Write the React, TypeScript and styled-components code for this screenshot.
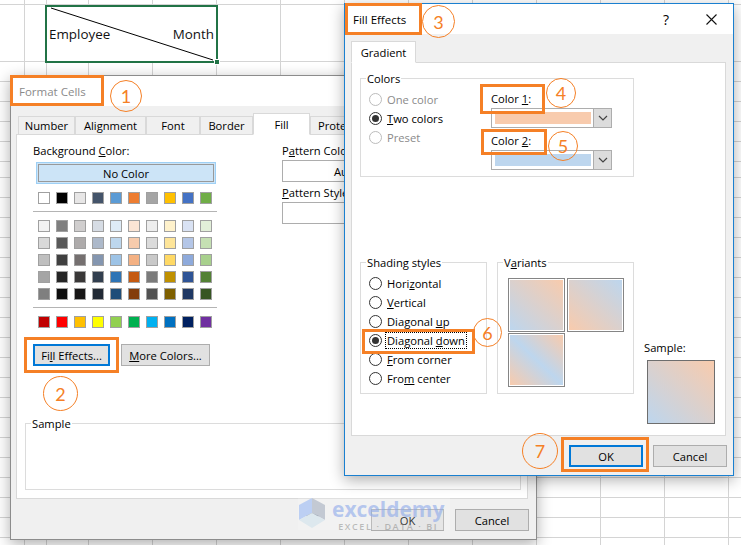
import React from "react";
import styled, { createGlobalStyle } from "styled-components";

const GRID = "#d4d4d4";
const ORANGE = "#f58026";
const PEACH = "#f8cbad";
const BLUE = "#bdd6ee";

const standardRow = ["#ffffff", "#000000", "#e7e6e6", "#44546a", "#5b9bd5", "#ed7d31", "#a5a5a5", "#ffc000", "#4472c4", "#70ad47"];
const themeRows = [
  ["#f2f2f2", "#7f7f7f", "#d0cece", "#d6dce4", "#deebf6", "#fbe5d5", "#ededed", "#fff2cc", "#d9e2f3", "#e2efd9"],
  ["#d9d9d9", "#595959", "#aeabab", "#adb9ca", "#bdd7ee", "#f7cbac", "#dbdbdb", "#fee599", "#b4c6e7", "#c5e0b3"],
  ["#bfbfbf", "#404040", "#757070", "#8496b0", "#9dc3e6", "#f4b183", "#c9c9c9", "#ffd965", "#8eaadb", "#a8d08d"],
  ["#a5a5a5", "#262626", "#3a3838", "#323f4f", "#2e74b5", "#c55a11", "#7b7b7b", "#bf9000", "#2f5496", "#538135"],
  ["#7f7f7f", "#0d0d0d", "#171616", "#222a35", "#1f4e79", "#833c0b", "#525252", "#7f6000", "#1f3864", "#375623"],
];
const brightRow = ["#c00000", "#ff0000", "#ffc000", "#ffff00", "#92d050", "#00b050", "#00b0f0", "#0070c0", "#002060", "#7030a0"];

const boxes = [
  { x: 10, y: 75, w: 94, h: 31 },
  { x: 24, y: 337, w: 95, h: 36 },
  { x: 345, y: 3, w: 77, h: 32 },
  { x: 480, y: 84, w: 65, h: 30 },
  { x: 481, y: 129, w: 66, h: 26 },
  { x: 362, y: 329, w: 113, h: 25 },
  { x: 561, y: 437, w: 88, h: 35 },
];
const circles = [
  { n: 1, x: 110, y: 80, d: 32 },
  { n: 2, x: 43, y: 376, d: 35 },
  { n: 3, x: 422, y: 5, d: 33 },
  { n: 4, x: 546, y: 78, d: 30 },
  { n: 5, x: 548, y: 131, d: 30 },
  { n: 6, x: 473, y: 318, d: 29 },
  { n: 7, x: 522, y: 433, d: 36 },
];

const GlobalStyle = createGlobalStyle`
  html, body {
    margin: 0;
    padding: 0;
    width: 741px;
    height: 545px;
    overflow: hidden;
    background: #fff;
  }
  * {
    box-sizing: border-box;
  }
`;

const Sheet = styled.div`
  position: relative;
  width: 741px;
  height: 545px;
  display: flex;
  flex-direction: column;
  overflow: hidden;
  font-family: "Open Sans", "Noto Sans", sans-serif;
  font-size: 11.2px;
  color: #000;
  background-image:
    linear-gradient(90deg, ${GRID} 1px, transparent 1px),
    linear-gradient(90deg, ${GRID} 1px, transparent 1px);
  background-size: 64px 100%, 1px 100%;
  background-position: 24px 0, 46px 0;
  background-repeat: repeat-x, no-repeat;
`;

const TallRow = styled.div`
  flex: none;
  height: 58px;
  margin-top: 4px;
  border-top: 1px solid ${GRID};
  border-bottom: 1px solid ${GRID};
`;

const Rows = styled.div<{ $height?: number; $offset: number }>`
  flex: ${(p) => (p.$height ? "none" : "1")};
  height: ${(p) => (p.$height ? `${p.$height}px` : "auto")};
  background-image: linear-gradient(${GRID} 1px, transparent 1px);
  background-size: 100% 20px;
  background-position: 0 ${(p) => p.$offset}px;
`;

const Cell = styled.div`
  position: absolute;
  left: 45px;
  top: 5px;
  width: 173px;
  height: 58px;
  border: 2px solid #217346;
  display: flex;
  align-items: center;
  justify-content: space-between;
  padding: 0 2px;
  font-size: 13.4px;
  color: #111;
  background: #fff;
`;

const Diagonal = styled.svg`
  position: absolute;
  left: -2px;
  top: -2px;
`;

const Handle = styled.div`
  position: absolute;
  right: -4px;
  bottom: -4px;
  width: 6px;
  height: 6px;
  background: #217346;
  border: 1px solid #fff;
`;

const Dialog = styled.div<{ $x: number; $y: number; $w: number; $h: number; $active?: boolean }>`
  position: absolute;
  left: ${(p) => p.$x}px;
  top: ${(p) => p.$y}px;
  width: ${(p) => p.$w}px;
  height: ${(p) => p.$h}px;
  display: flex;
  flex-direction: column;
  isolation: isolate;
  border: 1px solid ${(p) => (p.$active ? "#1a80d0" : "#8c8c8c")};
  box-shadow: 0 4px 14px rgba(0, 0, 0, 0.32);
  background: #f0f0f0;
`;

const TitleBar = styled.div<{ $muted?: boolean; $pad: number }>`
  flex: none;
  height: 30px;
  background: #fff;
  display: flex;
  align-items: center;
  justify-content: space-between;
  padding-left: ${(p) => p.$pad}px;
  font-size: 11.5px;
  color: ${(p) => (p.$muted ? "#8a8a8a" : "#000")};
`;

const TitleIcons = styled.div`
  display: flex;
  align-items: center;
`;

const HelpMark = styled.span`
  width: 44px;
  font-size: 14px;
  text-align: center;
  margin-right: 1px;
`;

const CloseButton = styled.span`
  width: 44px;
  display: flex;
  justify-content: center;
`;

const TabStrip = styled.div<{ $left: number }>`
  flex: none;
  height: 29px;
  padding-left: ${(p) => p.$left}px;
  display: flex;
  align-items: flex-end;
  position: relative;
  z-index: 1;
  margin-bottom: -1px;
`;

const Tab = styled.div<{ $w: number; $active?: boolean }>`
  width: ${(p) => p.$w}px;
  height: ${(p) => (p.$active ? 22 : 19)}px;
  background: ${(p) => (p.$active ? "#fff" : "#f0f0f0")};
  border: 1px solid #d9d9d9;
  border-bottom: ${(p) => (p.$active ? "1px solid #fff" : "1px solid #d9d9d9")};
  display: flex;
  align-items: center;
  justify-content: center;
  white-space: nowrap;
  overflow: hidden;
`;

const Panel = styled.div<{ $left: number; $w: number; $h: number; $top: number; $pad: number }>`
  flex: none;
  margin-left: ${(p) => p.$left}px;
  width: ${(p) => p.$w}px;
  height: ${(p) => p.$h}px;
  background: #fff;
  border: 1px solid #d9d9d9;
  padding: ${(p) => p.$top}px 0 0 ${(p) => p.$pad}px;
  display: flex;
  flex-direction: column;
`;

const FillColumns = styled.div`
  display: flex;
  gap: 65px;
`;

const ColorColumn = styled.div`
  width: 184px;
`;

const PatternColumn = styled.div`
  width: 232px;
`;

const Label = styled.div`
  height: 16px;
  line-height: 16px;
  white-space: nowrap;
`;

const NoColorButton = styled.div`
  margin: 3px 0 0 3px;
  width: 180px;
  height: 22px;
  border: 2px solid #cce4f7;
  outline: 1px solid #9ed0f5;
  outline-offset: -1px;
  background: #cce4f7;
  display: flex;
  align-items: center;
  justify-content: center;
  box-shadow: inset 0 0 0 1px #999;
`;

const SwatchRow = styled.div<{ $top: number }>`
  display: grid;
  grid-template-columns: repeat(10, 12px);
  column-gap: 6px;
  margin: ${(p) => p.$top}px 0 0 5px;
`;

const Swatch = styled.div<{ $color: string }>`
  width: 12px;
  height: 12px;
  border: 1px solid #a0a0a0;
  background: ${(p) => p.$color};
`;

const Separator = styled.div`
  height: 1px;
  margin-top: 7px;
  background: #b4b4b4;
`;

const ButtonRow = styled.div`
  display: flex;
  gap: 11px;
  margin-top: 16px;
`;

const Button = styled.div<{ $w: number; $focus?: boolean }>`
  width: ${(p) => p.$w}px;
  height: 22px;
  background: #e1e1e1;
  border: ${(p) => (p.$focus ? "2px solid #0078d7" : "1px solid #adadad")};
  display: flex;
  align-items: center;
  justify-content: center;
`;

const PatternBox = styled.div<{ $h: number }>`
  height: ${(p) => p.$h}px;
  margin: 1px 0 3px;
  border: 1px solid #adadad;
  background: #fff;
  display: flex;
  align-items: center;
  padding-left: 51px;
`;

const Group = styled.div<{ $w: number; $h: number; $top?: number }>`
  position: relative;
  flex: none;
  width: ${(p) => p.$w}px;
  height: ${(p) => p.$h}px;
  margin-top: ${(p) => p.$top ?? 0}px;
  border: 1px solid #dcdcdc;
`;

const SampleGroup = styled(Group)`
  margin-left: -8px;
`;

const Legend = styled.span`
  position: absolute;
  left: 5px;
  top: -8px;
  padding: 0 1px;
  background: #fff;
  line-height: 16px;
`;

const Footer = styled.div<{ $top: number; $right: number; $gap: number }>`
  display: flex;
  justify-content: flex-end;
  gap: ${(p) => p.$gap}px;
  padding: ${(p) => p.$top}px ${(p) => p.$right}px 0 0;
`;

const RadioList = styled.div<{ $top: number }>`
  padding: ${(p) => p.$top}px 0 0 8px;
  display: flex;
  flex-direction: column;
`;

const RadioRow = styled.div<{ $disabled?: boolean }>`
  display: flex;
  align-items: center;
  height: 19px;
  gap: 5px;
  color: ${(p) => (p.$disabled ? "#8a8a8a" : "#000")};
  white-space: nowrap;
`;

const RadioMark = styled.span<{ $checked?: boolean; $disabled?: boolean }>`
  flex: none;
  width: 13px;
  height: 13px;
  border-radius: 50%;
  border: 1px solid ${(p) => (p.$disabled ? "#bcbcbc" : "#333")};
  background: #fff;
  display: flex;
  align-items: center;
  justify-content: center;
  &::after {
    content: "";
    display: ${(p) => (p.$checked ? "block" : "none")};
    width: 7px;
    height: 7px;
    border-radius: 50%;
    background: #333;
  }
`;

const FocusLabel = styled.span`
  outline: 1px dotted #000;
  margin-left: -1px;
  padding: 0 1px;
  line-height: 13px;
`;

const ColorsBody = styled.div`
  display: flex;
  justify-content: space-between;
  height: 100%;
  padding-right: 21px;
`;

const ColorPickers = styled.div`
  width: 121px;
  padding-top: 12px;
`;

const Combo = styled.div<{ $bottom: number }>`
  position: relative;
  height: 20px;
  margin: 1px 0 ${(p) => p.$bottom}px;
  background: #fff;
  border: 1px solid #adadad;
  display: flex;
  align-items: stretch;
  padding: 3px 0 3px 3px;
`;

const ComboFill = styled.div<{ $color: string }>`
  width: 96px;
  background: ${(p) => p.$color};
`;

const ComboArrow = styled.div`
  position: absolute;
  right: 0;
  top: 0;
  bottom: 0;
  width: 18px;
  background: #dcdcdc;
  border-left: 1px solid #adadad;
  display: flex;
  align-items: center;
  justify-content: center;
`;

const LowerRow = styled.div`
  display: flex;
  align-items: flex-start;
  margin-top: 85px;
  gap: 10px;
`;

const VariantGrid = styled.div`
  display: grid;
  grid-template-columns: 57px 57px;
  grid-template-rows: 54px 54px;
  column-gap: 2px;
  row-gap: 1px;
  padding: 15px 0 0 10px;
`;

const Variant = styled.div<{ $fill: string }>`
  border: 1px solid #858585;
  padding: 1px;
  background: ${(p) => p.$fill} content-box;
`;

const SampleColumn = styled.div`
  margin-top: 78px;
`;

const SampleBox = styled.div`
  width: 68px;
  height: 64px;
  margin: 4px 0 0 3px;
  border: 1px solid #6e6e6e;
  background: linear-gradient(to top right, ${BLUE}, ${PEACH});
`;

const AnnotationBox = styled.div<{ $x: number; $y: number; $w: number; $h: number }>`
  position: absolute;
  left: ${(p) => p.$x}px;
  top: ${(p) => p.$y}px;
  width: ${(p) => p.$w}px;
  height: ${(p) => p.$h}px;
  border: 3px solid ${ORANGE};
`;

const AnnotationCircle = styled.div<{ $x: number; $y: number; $d: number }>`
  position: absolute;
  left: ${(p) => p.$x}px;
  top: ${(p) => p.$y}px;
  width: ${(p) => p.$d}px;
  height: ${(p) => p.$d}px;
  border: 1px solid ${ORANGE};
  border-radius: 50%;
  display: flex;
  align-items: center;
  justify-content: center;
  color: ${ORANGE};
  font-family: "Lato", sans-serif;
  font-size: 18px;
`;

const Watermark = styled.div`
  position: absolute;
  left: 298px;
  top: 497px;
  width: 152px;
  height: 33px;
  display: flex;
  align-items: flex-start;
  gap: 5px;
  background: rgba(255, 255, 255, 0.18);
`;

const WatermarkText = styled.div`
  display: flex;
  flex-direction: column;
  align-items: center;
`;

const WatermarkName = styled.span`
  font-size: 21px;
  line-height: 25px;
  font-weight: 700;
  color: rgba(140, 168, 235, 0.6);
`;

const WatermarkTag = styled.span`
  font-size: 9px;
  line-height: 9px;
  font-weight: 600;
  letter-spacing: 1.6px;
  color: rgba(130, 130, 130, 0.5);
  white-space: nowrap;
`;

const Logo = () => (
  <svg width="29" height="32" viewBox="0 0 29 32">
    <polygon points="14,1 27,8 27,23 14,16" fill="#c3c9d3" />
    <polygon points="14,1 1,8 1,23 14,16" fill="#bccff3" />
    <polygon points="14,16 8,19 14,23 21,19" fill="#9aa3b0" />
    <polygon points="1,23 14,31 27,23 14,16" fill="#dde8ee" />
  </svg>
);

const Radio = ({ label, checked, disabled }: { label: React.ReactNode; checked?: boolean; disabled?: boolean }) => (
  <RadioRow $disabled={disabled}>
    <RadioMark $checked={checked} $disabled={disabled} />
    <span>{label}</span>
  </RadioRow>
);

const Chevron = () => (
  <svg width="10" height="6" viewBox="0 0 10 6">
    <path d="M1 1l4 4 4-4" fill="none" stroke="#444" strokeWidth="1.2" />
  </svg>
);

const App: React.FC = () => {
  return (
    <Sheet>
      <GlobalStyle />
      <TallRow />
      <Rows $height={115} $offset={19} />
      <Rows $offset={0} />

      <Cell>
        <Diagonal width="173" height="58">
          <line x1="6" y1="3" x2="168" y2="55" stroke="#000" strokeWidth="1" />
        </Diagonal>
        <span>Employee</span>
        <span>Month</span>
        <Handle />
      </Cell>

      <Dialog $x={10} $y={75} $w={527} $h={465}>
        <TitleBar $muted $pad={8}>Format Cells</TitleBar>
        <TabStrip $left={7}>
          <Tab $w={57}>Number</Tab>
          <Tab $w={71}>Alignment</Tab>
          <Tab $w={54}>Font</Tab>
          <Tab $w={53}>Border</Tab>
          <Tab $w={57} $active>Fill</Tab>
          <Tab $w={70}>Protection</Tab>
        </TabStrip>
        <Panel $left={5} $w={512} $h={365} $top={8} $pad={16}>
          <FillColumns>
            <ColorColumn>
              <Label>Background <u>C</u>olor:</Label>
              <NoColorButton>No Color</NoColorButton>
              <SwatchRow $top={8}>
                {standardRow.map((c, i) => <Swatch key={i} $color={c} />)}
              </SwatchRow>
              <Separator />
              {themeRows.map((row, r) => (
                <SwatchRow key={r} $top={r === 0 ? 8 : 5}>
                  {row.map((c, i) => <Swatch key={i} $color={c} />)}
                </SwatchRow>
              ))}
              <Separator />
              <SwatchRow $top={8}>
                {brightRow.map((c, i) => <Swatch key={i} $color={c} />)}
              </SwatchRow>
              <ButtonRow>
                <Button $w={77} $focus>Fi<u>l</u>l Effects...</Button>
                <Button $w={89}><u>M</u>ore Colors...</Button>
              </ButtonRow>
            </ColorColumn>
            <PatternColumn>
              <Label>P<u>a</u>ttern Color:</Label>
              <PatternBox $h={22}>Automatic</PatternBox>
              <Label><u>P</u>attern Style:</Label>
              <PatternBox $h={22} />
            </PatternColumn>
          </FillColumns>
          <SampleGroup $w={496} $h={67} $top={57}>
            <Legend>Sample</Legend>
          </SampleGroup>
        </Panel>
        <Footer $top={10} $right={7} $gap={11}>
          <Button $w={73}>OK</Button>
          <Button $w={74}>Cancel</Button>
        </Footer>
      </Dialog>

      <Watermark>
        <Logo />
        <WatermarkText>
          <WatermarkName>exceldemy</WatermarkName>
          <WatermarkTag>EXCEL · DATA · BI</WatermarkTag>
        </WatermarkText>
      </Watermark>

      <Dialog $x={344} $y={3} $w={390} $h={473} $active>
        <TitleBar $pad={8}>
          Fill Effects
          <TitleIcons>
            <HelpMark>?</HelpMark>
            <CloseButton>
              <svg width="11" height="11" viewBox="0 0 11 11">
                <path d="M.5.5l10 10M10.5.5l-10 10" stroke="#111" strokeWidth="1.1" fill="none" />
              </svg>
            </CloseButton>
          </TitleIcons>
        </TitleBar>
        <TabStrip $left={6}>
          <Tab $w={65} $active>Gradient</Tab>
        </TabStrip>
        <Panel $left={6} $w={375} $h={374} $top={15} $pad={8}>
          <Group $w={274} $h={99}>
            <Legend>Colors</Legend>
            <ColorsBody>
              <RadioList $top={11}>
                <Radio label="One color" disabled />
                <Radio label={<><u>T</u>wo colors</>} checked />
                <Radio label="Preset" disabled />
              </RadioList>
              <ColorPickers>
                <Label>Color <u>1</u>:</Label>
                <Combo $bottom={5}>
                  <ComboFill $color={PEACH} />
                  <ComboArrow><Chevron /></ComboArrow>
                </Combo>
                <Label>Color <u>2</u>:</Label>
                <Combo $bottom={0}>
                  <ComboFill $color={BLUE} />
                  <ComboArrow><Chevron /></ComboArrow>
                </Combo>
              </ColorPickers>
            </ColorsBody>
          </Group>
          <LowerRow>
            <Group $w={127} $h={132}>
              <Legend>Shading styles</Legend>
              <RadioList $top={11}>
                <Radio label={<>Hori<u>z</u>ontal</>} />
                <Radio label={<><u>V</u>ertical</>} />
                <Radio label={<>Diagonal <u>u</u>p</>} />
                <Radio label={<FocusLabel>Diagonal <u>d</u>own</FocusLabel>} checked />
                <Radio label={<><u>F</u>rom corner</>} />
                <Radio label={<>Fro<u>m</u> center</>} />
              </RadioList>
            </Group>
            <Group $w={137} $h={132}>
              <Legend>V<u>a</u>riants</Legend>
              <VariantGrid>
                <Variant $fill={`linear-gradient(to top right, ${BLUE}, ${PEACH})`} />
                <Variant $fill={`linear-gradient(to top right, ${PEACH}, ${BLUE})`} />
                <Variant $fill={`linear-gradient(to top right, ${PEACH}, ${BLUE} 50%, ${PEACH})`} />
              </VariantGrid>
            </Group>
            <SampleColumn>
              <Label>Sample:</Label>
              <SampleBox />
            </SampleColumn>
          </LowerRow>
        </Panel>
        <Footer $top={9} $right={6} $gap={10}>
          <Button $w={74} $focus>OK</Button>
          <Button $w={74}>Cancel</Button>
        </Footer>
      </Dialog>

      {boxes.map((b, i) => (
        <AnnotationBox key={i} $x={b.x} $y={b.y} $w={b.w} $h={b.h} />
      ))}
      {circles.map((c) => (
        <AnnotationCircle key={c.n} $x={c.x} $y={c.y} $d={c.d}>{c.n}</AnnotationCircle>
      ))}
    </Sheet>
  );
};

export default App;
